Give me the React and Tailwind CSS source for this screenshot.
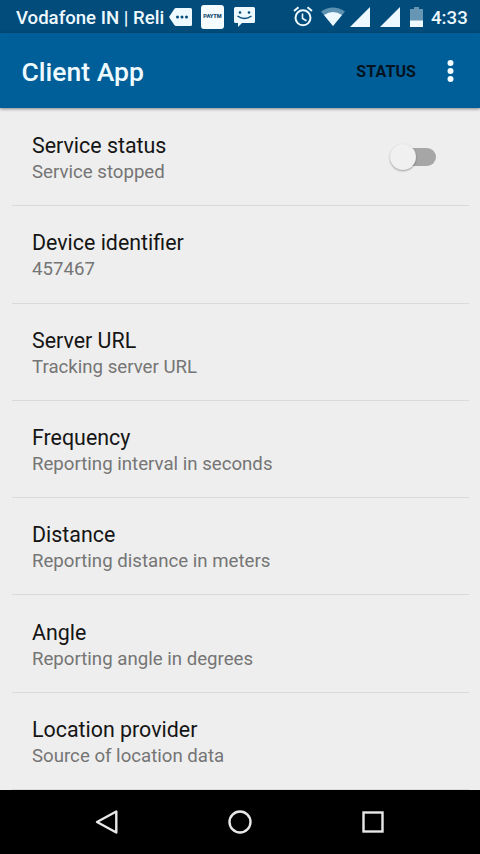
import React from "react";

const settings = [
  { title: "Service status", summary: "Service stopped", toggle: true },
  { title: "Device identifier", summary: "457467" },
  { title: "Server URL", summary: "Tracking server URL" },
  { title: "Frequency", summary: "Reporting interval in seconds" },
  { title: "Distance", summary: "Reporting distance in meters" },
  { title: "Angle", summary: "Reporting angle in degrees" },
  { title: "Location provider", summary: "Source of location data" },
];

function StatusBar() {
  return (
    <div className="flex h-[33px] shrink-0 items-center bg-[#014c7b] pl-4 text-[#eef9ff]">
      <span className="w-[149px] pt-[3px] text-[18.6px] leading-[30px] font-medium whitespace-nowrap">
        Vodafone IN | Reli
      </span>

      {/* notifications */}
      <svg className="ml-1 h-[18px] w-6 shrink-0" viewBox="0 0 24 18">
        <path d="M7 0h14.500a1.500 1.500 0 0 1 1.500 1.500v15a1.500 1.500 0 0 1-1.500 1.500H7q-1 0-1.700-1L0 9l5.300-8q.7-1 1.700-1z" fill="currentColor" />
        <g fill="#014c7b">
          <circle cx="8.500" cy="9" r="1.500" />
          <circle cx="13" cy="9" r="1.500" />
          <circle cx="17.500" cy="9" r="1.500" />
        </g>
      </svg>
      <div className="ml-2 flex h-6 w-[23px] shrink-0 items-center justify-center rounded-[3px] bg-[#f4fcff] text-[5.6px] leading-none font-black text-[#174d70]">
        PAYTM
      </div>
      <svg className="ml-[10px] h-5 w-[22px] shrink-0" viewBox="0 0 22 20">
        <path d="M1.500 0h18A1.500 1.500 0 0 1 21 1.500v13a1.500 1.500 0 0 1-1.500 1.500H8l-4 4v-4H1.500A1.500 1.500 0 0 1 0 14.500v-13A1.500 1.500 0 0 1 1.500 0z" fill="currentColor" />
        <circle cx="6" cy="5.500" r="1.300" fill="#014c7b" />
        <circle cx="15" cy="5.500" r="1.300" fill="#014c7b" />
        <path d="M3.500 9q7 5 14 0" fill="none" stroke="#014c7b" strokeWidth="1.500" />
      </svg>

      {/* system icons */}
      <svg className="ml-[37px] h-[21px] w-5 shrink-0" viewBox="0 0 20 21" fill="none" stroke="currentColor">
        <circle cx="10" cy="11.800" r="7.500" strokeWidth="2" />
        <path d="M1 5 5.500 1.200M19 5l-4.500-3.800" strokeWidth="2" />
        <path d="M9.500 7.500v5l4 2.300" strokeWidth="1.600" />
      </svg>
      <svg className="ml-2 h-[19px] w-6 shrink-0" viewBox="0 0 24 19">
        <path d="M0 4.500Q12-3.500 24 4.500L12 19z" fill="#5d91b0" />
        <path d="M3 8q9-6 18 0l-9 11z" fill="currentColor" />
      </svg>
      <svg className="ml-[5px] h-5 w-5 shrink-0" viewBox="0 0 20 20">
        <path d="M20 0v20H0z" fill="currentColor" />
      </svg>
      <svg className="ml-[9.500px] h-5 w-5 shrink-0" viewBox="0 0 20 20">
        <path d="M20 0v20H0z" fill="currentColor" />
      </svg>
      <svg className="ml-[10.500px] h-5 w-[13px] shrink-0" viewBox="0 0 13 20">
        <path d="M4 0h5v2h4v12H0V2h4z" fill="#6696b4" />
        <path d="M0 13.500h13V20H0z" fill="currentColor" />
      </svg>
      <span className="ml-2 pt-[3px] text-[18.7px] leading-[30px] font-medium">4:33</span>
    </div>
  );
}

function Toolbar() {
  return (
    <header className="z-10 flex h-[75px] shrink-0 items-center bg-[#005f98] pr-[26px] pl-[21.500px] shadow-[0_1px_3px_rgba(0,0,0,0.45)]">
      <h1 className="pt-[2px] text-[26.5px] leading-8 font-medium text-[#eefaff]">Client App</h1>
      <button className="ml-auto pt-[2px] text-[16px] leading-5 font-bold tracking-[0.1px] text-[#03131f]">
        STATUS
      </button>
      <svg className="ml-[31px] h-6 w-[7px]" viewBox="0 0 7 24" fill="#f2fcff">
        <circle cx="3.500" cy="4" r="3" />
        <circle cx="3.500" cy="12" r="3" />
        <circle cx="3.500" cy="20" r="3" />
      </svg>
    </header>
  );
}

function Switch() {
  return (
    <div className="flex h-7 w-[46px] items-center">
      <div className="z-10 h-[26px] w-[26px] shrink-0 rounded-full bg-[#f0f0f0] shadow-[0_1px_2px_rgba(0,0,0,0.35)]" />
      <div className="-ml-3 h-[18px] w-8 rounded-full bg-[#a6a6a6]" />
    </div>
  );
}

function SettingRow({ title, summary, toggle }) {
  return (
    <div className="mr-[11px] ml-3 flex items-center justify-between border-b border-[#dadada] pr-[33px] pl-5">
      <div className="pt-1">
        <div className="text-[21.4px] leading-[27px] text-[#151515]">{title}</div>
        <div className="text-[18.65px] leading-[27px] text-[#757575]">{summary}</div>
      </div>
      {toggle && <Switch />}
    </div>
  );
}

function NavBar() {
  return (
    <nav className="flex h-16 shrink-0 items-center justify-between bg-black px-[94px]">
      <svg className="h-[26px] w-[26px]" viewBox="0 0 26 26" fill="none" stroke="#e8e8e8" strokeWidth="2.400">
        <path d="M22.300 2.500v21L3 13z" strokeLinejoin="round" />
      </svg>
      <svg className="h-[26px] w-[26px]" viewBox="0 0 26 26" fill="none" stroke="#e8e8e8" strokeWidth="2.400">
        <circle cx="13" cy="13" r="10.500" />
      </svg>
      <svg className="h-[26px] w-[26px]" viewBox="0 0 26 26" fill="none" stroke="#e8e8e8" strokeWidth="2.400">
        <rect x="3.500" y="3.500" width="19" height="19" />
      </svg>
    </nav>
  );
}

export default function App() {
  return (
    <div className="flex h-[854px] w-[480px] flex-col overflow-hidden bg-[#eeeeee] font-['Roboto',sans-serif]">
      <StatusBar />
      <Toolbar />
      <main className="grid flex-1 grid-rows-7 pt-px">
        {settings.map((item) => (
          <SettingRow key={item.title} {...item} />
        ))}
      </main>
      <NavBar />
    </div>
  );
}
